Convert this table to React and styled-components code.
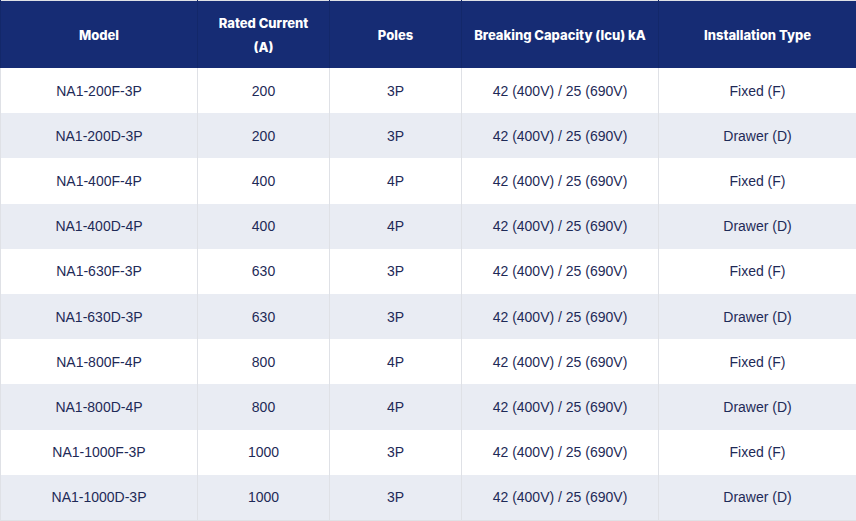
import React from 'react';
import styled, { createGlobalStyle } from 'styled-components';

const GlobalStyle = createGlobalStyle`
  html, body {
    margin: 0;
    padding: 0;
    background: #ffffff;
  }
`;

const Wrap = styled.div`
  width: 856px;
`;

const Table = styled.table`
  width: 856px;
  border-collapse: collapse;
  table-layout: fixed;
  border: 1px solid #dfe1e6;
  font-family: "Liberation Sans", Arial, sans-serif;
`;

const HeadRow = styled.tr`
  background-color: #162c74;
`;

const Th = styled.th`
  height: 67px;
  padding: 0 12px;
  color: #ffffff;
  font-family: Inter, "Noto Sans", sans-serif;
  font-weight: 800;
  font-size: 13px;
  line-height: 24px;
  letter-spacing: 0;
  text-align: center;
  border-left: 1px solid #13286a;
  white-space: ${(p) => (p.nowrap ? 'nowrap' : 'normal')};
`;

const Row = styled.tr`
  background-color: ${(p) => (p.striped ? '#e9ecf3' : '#ffffff')};
`;

const Td = styled.td`
  height: 45.2px;
  padding: 0 10px;
  color: #1e2a57;
  font-size: 14px;
  text-align: center;
  border: 1px solid #dfe1e6;
  border-top: none;
  border-bottom: none;
`;

const columns = [
  { label: 'Model', width: 197 },
  { label: 'Rated Current (A)', width: 132 },
  { label: 'Poles', width: 132 },
  { label: 'Breaking Capacity (Icu) kA', width: 197, nowrap: true },
  { label: 'Installation Type', width: 198 },
];

const breakers = [
  ['NA1-200F-3P', '200', '3P', 'Fixed (F)'],
  ['NA1-200D-3P', '200', '3P', 'Drawer (D)'],
  ['NA1-400F-4P', '400', '4P', 'Fixed (F)'],
  ['NA1-400D-4P', '400', '4P', 'Drawer (D)'],
  ['NA1-630F-3P', '630', '3P', 'Fixed (F)'],
  ['NA1-630D-3P', '630', '3P', 'Drawer (D)'],
  ['NA1-800F-4P', '800', '4P', 'Fixed (F)'],
  ['NA1-800D-4P', '800', '4P', 'Drawer (D)'],
  ['NA1-1000F-3P', '1000', '3P', 'Fixed (F)'],
  ['NA1-1000D-3P', '1000', '3P', 'Drawer (D)'],
];

const CAPACITY = '42 (400V) / 25 (690V)';

const App = () => {
  return (
    <Wrap>
      <GlobalStyle />
      <Table>
        <colgroup>
          {columns.map((c) => (
            <col key={c.label} style={{ width: c.width }} />
          ))}
        </colgroup>
        <thead>
          <HeadRow>
            {columns.map((c) => (
              <Th key={c.label} nowrap={c.nowrap}>
                {c.label}
              </Th>
            ))}
          </HeadRow>
        </thead>
        <tbody>
          {breakers.map(([model, current, poles, type], i) => (
            <Row key={model} striped={i % 2 === 1}>
              <Td>{model}</Td>
              <Td>{current}</Td>
              <Td>{poles}</Td>
              <Td>{CAPACITY}</Td>
              <Td>{type}</Td>
            </Row>
          ))}
        </tbody>
      </Table>
    </Wrap>
  );
};

export default App;
